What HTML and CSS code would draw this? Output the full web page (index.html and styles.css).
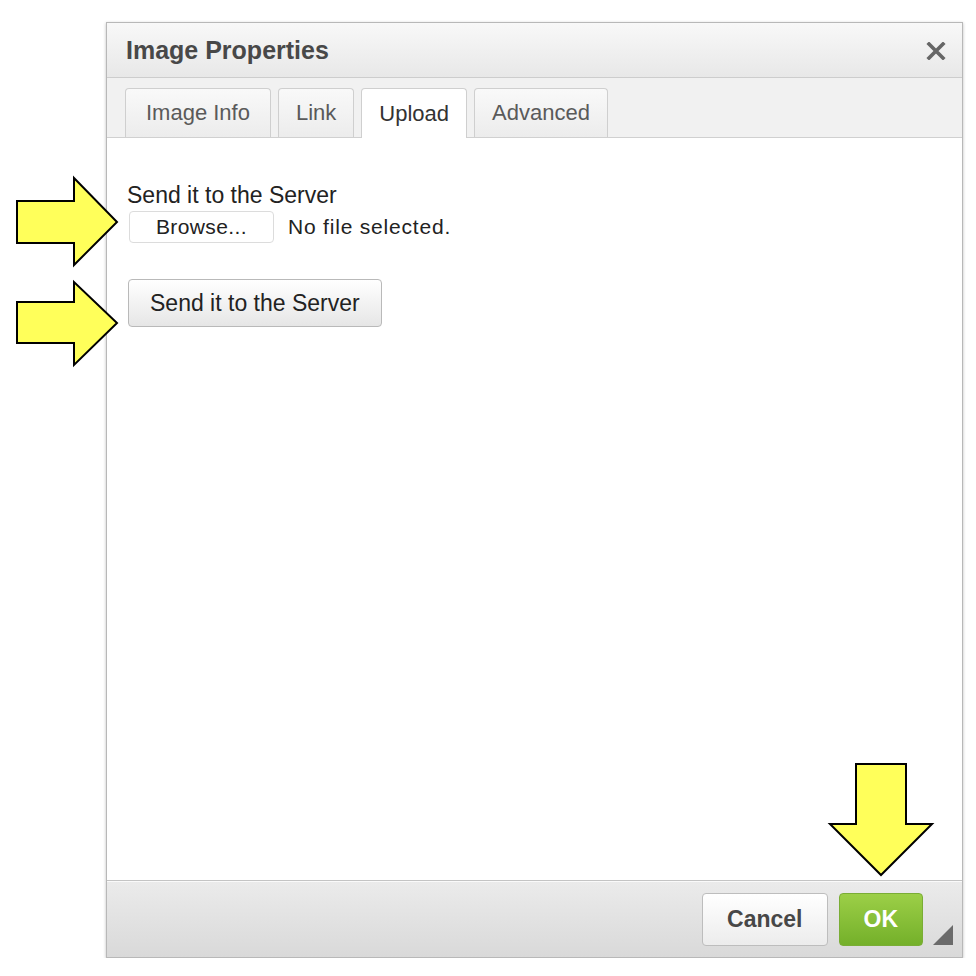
FILE: index.html
```html
<!DOCTYPE html>
<html lang="en">
<head>
    <meta charset="UTF-8">
    <title>Image Properties</title>
    <link rel="stylesheet" href="styles.css">
</head>
<body>
    <div class="dialog">
        <div class="dialog-title">
            <span>Image Properties</span>
            <svg class="close" width="20" height="18" viewBox="0 0 20 18">
                <path d="M3 2 L17 16 M17 2 L3 16" stroke="#666" stroke-width="3.6" stroke-linecap="square"/>
            </svg>
        </div>

        <div class="tabs">
            <div class="tab">Image Info</div>
            <div class="tab">Link</div>
            <div class="tab active">Upload</div>
            <div class="tab">Advanced</div>
        </div>

        <div class="dialog-body">
            <div class="field-label">Send it to the Server</div>
            <div class="file-row">
                <span class="browse">Browse...</span>
                <span class="file-name">No file selected.</span>
            </div>
            <div class="send-row">
                <span class="btn">Send it to the Server</span>
            </div>
        </div>

        <div class="dialog-footer">
            <span class="btn btn-cancel">Cancel</span>
            <span class="btn btn-ok">OK</span>
            <svg class="resize" width="20" height="20" viewBox="0 0 20 20">
                <polygon points="20,0 20,20 0,20" fill="#6b6b6b"/>
            </svg>
        </div>
    </div>

    <!-- annotation arrows -->
    <svg class="arrow arrow-browse" width="106" height="94" viewBox="0 0 106 94">
        <polygon points="3,26 60,26 60,3 103,47 60,90 60,68 3,68" fill="#ffff5a" stroke="#000" stroke-width="2" stroke-linejoin="miter"/>
    </svg>
    <svg class="arrow arrow-send" width="106" height="90" viewBox="0 0 106 90">
        <polygon points="3,23 60,23 60,3 103,44 60,86 60,64 3,64" fill="#ffff5a" stroke="#000" stroke-width="2" stroke-linejoin="miter"/>
    </svg>
    <svg class="arrow arrow-ok" width="108" height="118" viewBox="0 0 108 118">
        <polygon points="29,3 79,3 79,63 105,63 54,114 3,63 29,63" fill="#ffff5a" stroke="#000" stroke-width="2" stroke-linejoin="miter"/>
    </svg>
</body>
</html>
```

FILE: styles.css
```css
* {
    margin: 0;
    padding: 0;
    box-sizing: border-box;
}

body {
    font-family: "Liberation Sans", Arial, sans-serif;
    background-color: #ffffff;
    color: #333;
    padding: 22px 0 0 106px;
}

.dialog {
    width: 857px;
    height: 936px;
    border: 1px solid #b8b8b8;
    box-shadow: 0 1px 3px rgba(0, 0, 0, 0.25);
    display: flex;
    flex-direction: column;
    background-color: #fff;
}

.dialog-title {
    height: 55px;
    display: flex;
    align-items: center;
    justify-content: space-between;
    padding: 0 16px 0 19px;
    font-size: 25px;
    font-weight: bold;
    color: #484848;
    background: linear-gradient(#f8f8f8, #e8e8e8);
    border-bottom: 1px solid #cdcdcd;
}

.close {
    margin-top: 2px;
}

.tabs {
    height: 60px;
    display: flex;
    align-items: flex-end;
    gap: 7px;
    padding-left: 18px;
    background-color: #f1f1f1;
    border-bottom: 1px solid #d0d0d0;
}

.tab {
    height: 49px;
    padding: 0 17px;
    display: flex;
    align-items: center;
    font-size: 22px;
    color: #5a5a5a;
    background: linear-gradient(#f9f9f9, #ececec);
    border: 1px solid #cfcfcf;
    border-bottom: none;
    border-radius: 4px 4px 0 0;
}

.tab:first-child {
    padding: 0 20px;
}

.tab.active {
    color: #333;
    background: #fff;
    height: 50px;
    margin-bottom: -1px;
}

.dialog-body {
    flex: 1;
    padding: 44px 20px 0 20px;
}

.field-label {
    font-size: 23px;
    line-height: 26px;
    color: #222;
}

.file-row {
    display: flex;
    align-items: center;
    gap: 14px;
    margin-top: 3px;
    padding-left: 2px;
}

.browse {
    width: 145px;
    height: 32px;
    display: flex;
    align-items: center;
    justify-content: center;
    font-size: 21px;
    letter-spacing: 0.4px;
    color: #222;
    background: #fff;
    border: 1px solid #dcdcdc;
    border-radius: 4px;
}

.file-name {
    font-size: 21px;
    letter-spacing: 0.8px;
    color: #222;
}

.send-row {
    margin-top: 36px;
    display: flex;
    padding-left: 1px;
}

.btn {
    display: inline-flex;
    align-items: center;
    justify-content: center;
    height: 48px;
    padding: 0 21px;
    font-size: 23px;
    color: #222;
    background: linear-gradient(#ffffff, #e6e6e6);
    border: 1px solid #b9b9b9;
    border-radius: 4px;
}

.dialog-footer {
    position: relative;
    height: 77px;
    display: flex;
    align-items: center;
    justify-content: flex-end;
    gap: 11px;
    padding-right: 39px;
    background: linear-gradient(#ebebeb, #d9d9d9);
    border-top: 1px solid #c4c4c4;
    box-shadow: inset 0 1px 0 #fafafa;
}

.btn-cancel {
    height: 53px;
    padding: 0 24px;
    font-weight: bold;
    color: #474747;
    background: linear-gradient(#ffffff, #ececec);
    border-color: #bdbdbd;
}

.btn-ok {
    height: 53px;
    padding: 0 24px;
    font-weight: bold;
    color: #fff;
    background: linear-gradient(#9ccf47, #74b02a);
    border-color: #7aad35;
}

.resize {
    position: absolute;
    right: 9px;
    bottom: 12px;
}

.arrow {
    position: absolute;
}

.arrow-browse {
    left: 14px;
    top: 175px;
}

.arrow-send {
    left: 14px;
    top: 279px;
}

.arrow-ok {
    left: 827px;
    top: 761px;
}
```
